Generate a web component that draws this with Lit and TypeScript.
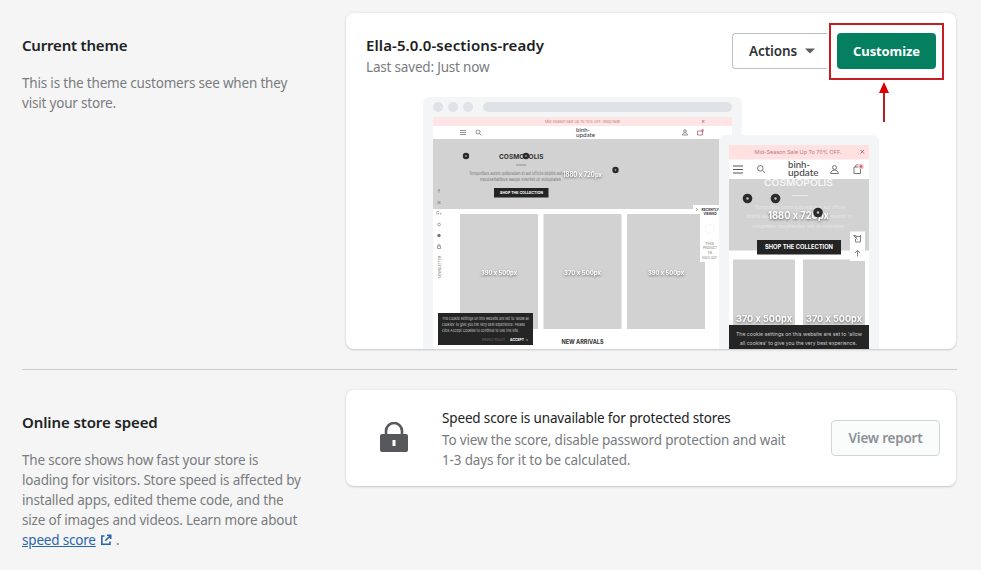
import { LitElement, html, svg, css } from "lit";
import { customElement } from "lit/decorators.js";

const hotspot = (x: number, y: number, r: number) => svg`
  <circle cx=${x} cy=${y} r=${r} fill="#2b2b2b" />
  <circle cx=${x} cy=${y} r=${r * 0.25} fill="#c8c8c8" />`;

const label = (x: number, y: number, w: number, size: number, cls: string, text: string) => svg`
  <text class=${cls} x=${x} y=${y} font-size=${size} textLength=${w} lengthAdjust="spacingAndGlyphs">${text}</text>`;

@customElement("theme-preview")
class ThemePreview extends LitElement {
  static styles = css`
    :host { display: block; height: 252px; }
    svg { display: block; }
    text { font-family: Inter, "Noto Sans", sans-serif; font-feature-settings: "calt" 0; }
    .ink { fill: #747474; }
    .logo { fill: #444; font-family: Lato, sans-serif; font-weight: 500; }
    .strong { fill: #333; font-weight: 700; }
    .pink { fill: #b8797d; }
    .white { fill: #fff; font-weight: 700; }
    .size { fill: #fff; font-weight: 700; filter: drop-shadow(0.5px 1.5px 1px rgba(0, 0, 0, 0.5)); }
    .ghost { fill: #e6e6e6; }
    .ghost-title { fill: #f6f6f6; font-weight: 600; }
    .cookie { fill: #c9c9c9; }
    .dim { fill: #777; }
  `;

  desktop() {
    return svg`
      <path d="M423 349V103a6 6 0 0 1 6-6h307a6 6 0 0 1 6 6v246z" fill="#f4f5f6" />
      <g fill="#dfe2e6">
        <circle cx="438" cy="107" r="5" /><circle cx="453" cy="107" r="5" /><circle cx="468" cy="107" r="5" />
        <rect x="483" y="102" width="249" height="10" rx="5" />
      </g>
      <rect x="433" y="117" width="299" height="232" fill="#fff" />
      <rect x="433" y="117" width="299" height="9" fill="#ffe5e6" />
      ${label(545, 123, 75, 4, "pink", "Mid-Season Sale Up To 70% OFF. Shop Now")}
      <path d="m702 120 2.4 2.8m0-2.8-2.4 2.8" stroke="#a65" stroke-width=".7" />
      <path d="M460 130.5h6m-6 2h6m-6 2h6" stroke="#777" stroke-width=".8" />
      <g fill="none" stroke="#777" stroke-width=".8">
        <circle cx="478" cy="132" r="2" /><path d="m479.5 133.500 2 2" />
        <circle cx="685" cy="131" r="1.3" /><path d="M682.500 135c0-3 5-3 5 0z" />
        <path d="M697.500 131h5v4h-5z" stroke="#a67" />
      </g>
      <circle cx="702.500" cy="130.500" r="1.300" fill="#d7707e" />
      ${label(576, 131.500, 14, 6, "logo", "binh-")}
      ${label(576, 137, 19, 6, "logo", "update")}
      <rect x="433" y="139" width="299" height="70" fill="#d2d2d2" />
      ${label(499, 159, 44.500, 6.700, "strong", "COSMOPOLIS")}
      <path d="M516 165h10" stroke="#777" stroke-width=".7" />
      ${label(469, 174.500, 104, 4.300, "ink", "Temporibus autem quibusdam et aut officiis debitis aut rerum")}
      ${label(480, 180.500, 81, 4.300, "ink", "necessitatibus saepe eveniet ut voluptates")}
      ${label(563, 177, 39, 7, "size", "1880 x 720px")}
      <rect x="494" y="188" width="54.500" height="9.500" fill="#242424" />
      ${label(500, 194.300, 43, 4, "white", "SHOP THE COLLECTION")}
      ${hotspot(466, 156, 3.2)} ${hotspot(526, 156, 3.2)} ${hotspot(615.500, 170, 3.200)}
      <g fill="#d2d2d2">
        <rect x="460" y="214" width="78" height="115" />
        <rect x="543.500" y="214" width="78" height="115" />
        <rect x="627" y="214" width="78" height="115" />
      </g>
      ${label(481, 274.500, 36, 6.500, "size", "390 x 500px")}
      ${label(564, 274.500, 37, 6.500, "size", "370 x 500px")}
      ${label(648, 274.500, 36, 6.500, "size", "390 x 500px")}
      ${label(438, 193, 2, 5, "ink", "f")}
      <path d="m437.500 201 3 3m0-3-3 3" stroke="#777" stroke-width=".8" />
      ${label(436, 215, 6, 4.500, "ink", "G+")}
      <circle cx="439" cy="224.500" r="1.400" fill="none" stroke="#888" stroke-width=".7" />
      <circle cx="439" cy="235.500" r="1.700" fill="#777" />
      <path d="M437.500 246h3v2.500h-3zm.5 0c0-2.400 2-2.400 2 0" fill="none" stroke="#777" stroke-width=".7" />
      <g transform="rotate(-90 440.500 278)">${label(440.500, 278, 22, 4, "ink", "NEWSLETTER")}</g>
      <path d="M693 205h26v57h-19v-48h-7z" fill="#fff" />
      <path d="m696 208 1.500 1.500-1.500 1.500" fill="none" stroke="#777" stroke-width=".6" />
      ${label(701.500, 210.500, 17.500, 3.500, "strong", "RECENTLY")}
      ${label(703.500, 215, 13, 3.500, "strong", "VIEWED")}
      <circle cx="710" cy="229" r="4.500" fill="none" stroke="#f0f0f0" stroke-width=".7" />
      ${label(705, 244.500, 9, 3.500, "ink", "THIS")}
      ${label(703, 249, 14, 3.500, "ink", "PRODUCT")}
      ${label(708, 253.500, 4, 3.500, "ink", "IS")}
      ${label(702, 258.500, 15, 3.500, "ink", "SOLD OUT")}
      <rect x="438" y="313" width="95" height="32" fill="#252525" />
      ${label(442, 320, 87, 3.900, "cookie", "The cookie settings on this website are set to 'allow all")}
      ${label(442, 326.200, 83, 3.900, "cookie", "cookies' to give you the very best experience. Please")}
      ${label(442, 332.400, 77, 3.900, "cookie", "click Accept Cookies to continue to use the site.")}
      ${label(482, 341, 23, 3.500, "dim", "PRIVACY POLICY")}
      ${label(510, 341, 14, 3.500, "white", "ACCEPT")}
      ${label(526, 341, 2, 3.500, "cookie", "x")}
      ${label(561.500, 344, 42, 6, "strong", "NEW ARRIVALS")}`;
  }

  mobile() {
    return svg`
      <path d="M719 349V141a6 6 0 0 1 6-6h148a6 6 0 0 1 6 6v208z" fill="#f4f5f6" />
      <rect x="729" y="145" width="140" height="204" fill="#fff" />
      <rect x="729" y="145" width="140" height="14.500" fill="#ffe1e2" />
      ${label(754.500, 154, 87, 5.200, "pink", "Mid-Season Sale Up To 70% OFF.")}
      <path d="m860.500 150 3.500 3.500m0-3.500-3.500 3.500" stroke="#a55" stroke-width=".8" />
      <path d="M733 166h10m-10 3.500h10m-10 3.500h10" stroke="#555" />
      <g fill="none" stroke="#666" stroke-width=".9">
        <circle cx="760.300" cy="168.300" r="2.800" /><path d="m762.500 170.500 2.500 2.500" />
        <circle cx="834.500" cy="167.500" r="2" /><path d="M830.700 173.500c0-4.500 7.600-4.500 7.600 0z" />
        <path d="M858 167h-4v6.500h6.500v-4.500M855.500 167c0-2 1.500-3 3-2" />
      </g>
      <circle cx="861" cy="166.500" r="2.800" fill="#f8c5ca" /><circle cx="861" cy="166.500" r="1.200" fill="#bd5969" />
      ${label(788, 168, 22, 8.600, "logo", "binh-")}
      ${label(788, 176, 30.500, 8.600, "logo", "update")}
      <rect x="729" y="179" width="140" height="71.500" fill="#d2d2d2" />
      <svg x="729" y="179" width="140" height="12" viewBox="729 179 140 12">
        ${label(764, 185.700, 69, 9, "ghost-title", "COSMOPOLIS")}
      </svg>
      <path d="M792 195.500h16" stroke="#eee" stroke-width=".8" />
      ${label(755, 208.500, 90, 4.800, "ghost", "Temporibus autem quibusdam et aut officiis")}
      ${label(746, 218, 106, 4.800, "ghost", "debitis aut rerum necessitatibus saepe eveniet ut")}
      ${label(752, 228, 92, 4.800, "ghost", "voluptates repudiandae sint et molestiae")}
      ${label(768, 219, 61, 10.500, "size", "1880 x 720px")}
      ${hotspot(747.500, 198.500, 4.800)} ${hotspot(775.500, 198.500, 4.800)} ${hotspot(818, 212.500, 4.800)}
      <rect x="757" y="240" width="84" height="14.500" fill="#242424" />
      ${label(765, 249.300, 68, 5.500, "white", "SHOP THE COLLECTION")}
      <rect x="850" y="231.500" width="15" height="29.500" fill="#fff" />
      <g fill="none" stroke="#666" stroke-width=".8">
        <path d="M856 236.500h4.500v5.500h-5v-3M853.500 235.500h2.500v2.500M853.500 235.500l4 4M860.500 236.500v-1.500" />
        <path d="M857.500 256.500v-6m-2.500 2.500 2.500-2.500 2.500 2.500" />
      </g>
      <path d="M733 259.500h62V325h-62zM803 259.500h47v1.500h15V325h-62z" fill="#d2d2d2" />
      ${label(736, 322, 56, 9.500, "size", "370 x 500px")}
      ${label(806, 322, 56, 9.500, "size", "370 x 500px")}
      <rect x="729" y="325" width="140" height="24" fill="#252525" />
      ${label(736, 335.700, 126, 5.200, "cookie", "The cookie settings on this website are set to 'allow")}
      ${label(740, 345, 117, 5.200, "cookie", "all cookies' to give you the very best experience.")}`;
  }

  render() {
    return html`<svg width="456" height="252" viewBox="423 97 456 252">${this.desktop()}${this.mobile()}</svg>`;
  }
}

@customElement("app-root")
class AppRoot extends LitElement {
  static styles = css`
    :host {
      display: block;
      box-sizing: border-box;
      height: 570px;
      padding: 13px 25px 0 22px;
      overflow: hidden;
      background: #f5f5f5;
      color: #202223;
      font: 13.5px/20px "Noto Sans", "Open Sans", sans-serif;
    }
    .row { display: grid; grid-template-columns: 324px 610px; }
    .about { padding-top: 21px; }
    h2 { margin: 0; font-size: 15px; line-height: 22px; font-weight: 600; letter-spacing: -0.2px; }
    p { margin: 0; color: #797c7f; letter-spacing: -0.19px; white-space: nowrap; }
    .about p { margin-top: 17px; }
    .speed-about h2 { letter-spacing: -0.1px; }
    .card {
      box-sizing: border-box;
      border-radius: 8px;
      background: #fff;
      box-shadow: 0 0 4px rgba(23, 24, 24, 0.06), 0 1px 2px rgba(0, 0, 0, 0.16);
    }
    .theme { height: 336px; display: flex; flex-direction: column; justify-content: space-between; align-items: center; }
    header { box-sizing: border-box; width: 100%; padding: 20px 20px 0; display: flex; justify-content: space-between; }
    .name { padding-top: 1px; }
    .name h2 { letter-spacing: 0.1px; }
    .name p { margin-top: 1px; }
    .buttons { display: flex; gap: 10px; }
    button {
      box-sizing: border-box;
      height: 36px;
      padding: 0 16px;
      border: 1px solid #babfc3;
      border-radius: 4px;
      background: #fff;
      color: #303335;
      font: 600 13.5px/20px "Noto Sans", "Open Sans", sans-serif;
      white-space: nowrap;
    }
    .actions { width: 95px; padding-right: 0; border-right: 0; border-radius: 4px 0 0 4px; display: flex; align-items: center; gap: 8px; letter-spacing: -0.1px; }
    .callout { position: relative; }
    .customize { width: 99px; padding: 0; border: 0; background: #048061; color: #fff; font-weight: 700; font-size: 13px; letter-spacing: -0.1px; }
    .frame { position: absolute; left: -8px; top: -10px; width: 115px; height: 57px; box-sizing: border-box; border: 2px solid #c41e22; }
    .arrow { position: absolute; left: 42px; top: 49px; }
    hr { width: 935px; margin: 20px 0; border: 0; border-top: 1px solid #c9cccf; }
    .speed { height: 96px; margin-bottom: auto; padding: 0 16px 0 34px; display: flex; align-items: center; }
    .speed > svg { margin-bottom: 3px; }
    .message { flex: 1; padding: 2px 0 0 34px; }
    .message strong { display: block; margin-bottom: 2px; font-weight: 400; white-space: nowrap; letter-spacing: -0.15px; }
    .message p { letter-spacing: -0.16px; }
    .report { width: 109px; padding: 0; border-color: #d2d5d8; background: #fafbfb; color: #8c9196; letter-spacing: -0.2px; }
    a { color: #2a66ae; text-decoration: underline; }
    .external { margin: 0 1px 0 4px; vertical-align: -1px; }
  `;

  render() {
    return html`
      <section class="row">
        <div class="about">
          <h2>Current theme</h2>
          <p>This is the theme customers see when they<br />visit your store.</p>
        </div>
        <div class="card theme">
          <header>
            <div class="name">
              <h2>Ella-5.0.0-sections-ready</h2>
              <p>Last saved: Just now</p>
            </div>
            <div class="buttons">
              <button class="actions">
                Actions
                <svg width="10" height="6" viewBox="0 0 10 6"><path d="M0 .5h10L5 5.500z" fill="#5c5f62" /></svg>
              </button>
              <div class="callout">
                <button class="customize">Customize</button>
                <div class="frame"></div>
                <svg class="arrow" width="11" height="41" viewBox="0 0 11 41">
                  <path d="M5 8v32" stroke="#bd1c22" stroke-width="2" />
                  <path d="M5 0l5 11H0z" fill="#dc0005" />
                </svg>
              </div>
            </div>
          </header>
          <theme-preview></theme-preview>
        </div>
      </section>
      <hr />
      <section class="row">
        <div class="about speed-about">
          <h2>Online store speed</h2>
          <p>
            The score shows how fast your store is<br />loading for visitors. Store speed is affected by<br />installed
            apps, edited theme code, and the<br />size of images and videos. Learn more about<br /><a>speed score</a
            ><svg class="external" width="12" height="12" viewBox="0 0 12 12" fill="none" stroke="#2a66ae" stroke-width="1.600">
              <path d="M4.500 2H1.800v8.200H10V7.500M7 1.300h3.700V5M10.500 1.500 5.300 6.700" />
            </svg>
            .
          </p>
        </div>
        <div class="card speed">
          <svg width="28" height="30" viewBox="0 0 28 30">
            <path d="M6 13V9a8 8 0 0 1 16 0v4" fill="none" stroke="#56585b" stroke-width="2.600" />
            <rect y="12" width="28" height="18" rx="2" fill="#56585b" />
            <rect x="12.500" y="18" width="3" height="6" fill="#fff" />
          </svg>
          <div class="message">
            <strong>Speed score is unavailable for protected stores</strong>
            <p>To view the score, disable password protection and wait<br />1-3 days for it to be calculated.</p>
          </div>
          <button class="report">View report</button>
        </div>
      </section>
    `;
  }
}
